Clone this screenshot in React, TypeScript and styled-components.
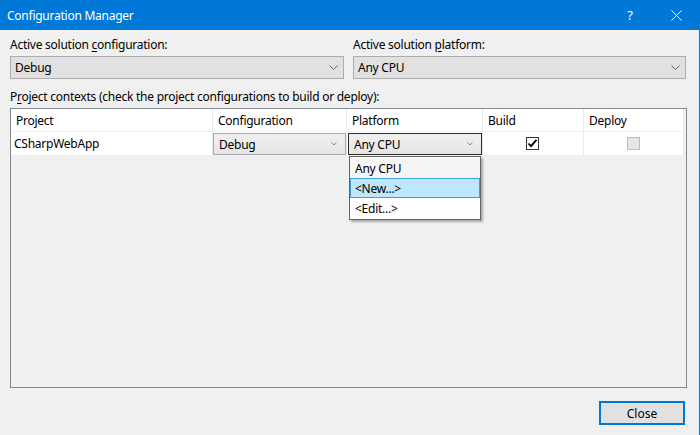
import React from 'react';
import styled, { createGlobalStyle } from 'styled-components';

const GlobalStyle = createGlobalStyle`
  html, body {
    margin: 0;
    padding: 0;
    background: #f0f0f0;
  }
  body {
    font-family: 'Segoe UI', 'Noto Sans', 'Open Sans', sans-serif;
    font-size: 12px;
    letter-spacing: -0.25px;
    color: #000;
  }
`;

const Window = styled.div`
  width: 700px;
  height: 435px;
  box-sizing: border-box;
  border-right: 1px solid #0078d7;
  background: #f0f0f0;
  display: flex;
  flex-direction: column;
  overflow: hidden;
`;

const TitleBar = styled.div`
  height: 30px;
  flex: none;
  background: #0078d7;
  color: #fff;
  display: flex;
  align-items: center;
  padding-left: 7px;
  font-size: 12px;
`;

const Title = styled.div`
  flex: 1;
`;

const TitleButton = styled.div`
  width: 46px;
  height: 30px;
  display: flex;
  align-items: center;
  justify-content: center;
  font-size: 13px;
`;

const Content = styled.div`
  flex: 1;
  display: flex;
  flex-direction: column;
  padding: 7px 13px 9px 10px;
  min-height: 0;
`;

const TopRow = styled.div`
  display: grid;
  grid-template-columns: 334px 333px;
  column-gap: 9px;
`;

const Field = styled.div`
  display: flex;
  flex-direction: column;
`;

const Label = styled.div`
  line-height: 16px;
  height: 16px;
  margin-bottom: 3px;
  white-space: nowrap;
`;

const Key = styled.span`
  text-decoration: underline;
  text-underline-offset: 2px;
`;

const Select = styled.div`
  height: 23px;
  box-sizing: border-box;
  border: 1px solid #adadad;
  background: #e1e1e1;
  display: flex;
  align-items: center;
  padding: 0 5px 0 4px;
`;

const SelectText = styled.div`
  flex: 1;
`;

const ContextsLabel = styled(Label)`
  margin-top: 10px;
  margin-bottom: 3px;
`;

const Grid = styled.div`
  flex: 1;
  border: 1px solid #828790;
  margin-right: -1px;
  background: #f0f0f0;
  display: flex;
  flex-direction: column;
`;

const GridRow = styled.div<{ $header?: boolean }>`
  display: grid;
  grid-template-columns: 202px 134px 136px 101px 100px;
  height: ${({ $header }) => ($header ? '22px' : '23px')};
  border-bottom: ${({ $header }) => ($header ? '1px solid #f0f0f0' : 'none')};
`;

const Cell = styled.div<{ $center?: boolean; $pad?: number }>`
  position: relative;
  background: #fff;
  border-right: 1px solid #eaeaea;
  display: flex;
  align-items: center;
  justify-content: ${({ $center }) => ($center ? 'center' : 'flex-start')};
  padding-left: ${({ $pad }) => $pad ?? 0}px;
  white-space: nowrap;
`;

const CellCombo = styled.div<{ $focused?: boolean }>`
  position: absolute;
  top: 1px;
  bottom: 0;
  left: ${({ $focused }) => ($focused ? '1px' : '0')};
  right: 0;
  box-sizing: border-box;
  border: 1px solid ${({ $focused }) => ($focused ? '#2b2b2b' : '#acacac')};
  background: linear-gradient(#f0f0f0, #e5e5e5);
  display: flex;
  align-items: center;
  padding: 0 8px 0 5px;
`;

const CheckBox = styled.div<{ $disabled?: boolean }>`
  width: 13px;
  height: 13px;
  box-sizing: border-box;
  border: 1px solid ${({ $disabled }) => ($disabled ? '#bcbcbc' : '#333')};
  background: ${({ $disabled }) => ($disabled ? '#e6e6e6' : '#fff')};
  display: flex;
  align-items: center;
  justify-content: center;
  margin-left: -1px;
`;

const Menu = styled.div`
  position: absolute;
  top: 24px;
  left: 2px;
  width: 132px;
  box-sizing: border-box;
  border: 1px solid #646464;
  background: #fff;
  box-shadow: 2px 2px 2px rgba(0, 0, 0, 0.3);
  padding: 1px 0;
  z-index: 2;
`;

const MenuItem = styled.div<{ $state?: 'current' | 'hover' }>`
  height: 20px;
  box-sizing: border-box;
  display: flex;
  align-items: center;
  padding-left: 4px;
  background: ${({ $state }) =>
    $state === 'hover' ? '#bee6fd' : $state === 'current' ? '#f5f5f5' : '#fff'};
  border: 1px solid ${({ $state }) => ($state === 'hover' ? '#3c9fd8' : 'transparent')};
`;

const Footer = styled.div`
  display: flex;
  justify-content: flex-end;
  padding-top: 13px;
  padding-bottom: 1px;
  margin-right: 1px;
`;

const Button = styled.button`
  width: 86px;
  height: 24px;
  box-sizing: border-box;
  border: 2px solid #0078d7;
  background: #e1e1e1;
  font: inherit;
  color: #000;
  padding: 0;
`;

const Chevron: React.FC<{ small?: boolean }> = ({ small }) =>
  small ? (
    <svg width="6" height="4" viewBox="0 0 6 4">
      <path d="M0.5 0.5 L3 3 L5.5 0.5" fill="none" stroke="#8a8a8a" strokeWidth="1" />
    </svg>
  ) : (
    <svg width="9" height="5" viewBox="0 0 9 5">
      <path d="M0.5 0.5 L4.5 4.5 L8.5 0.5" fill="none" stroke="#606060" strokeWidth="1" />
    </svg>
  );

const CloseIcon = () => (
  <svg width="11" height="11" viewBox="0 0 11 11">
    <path d="M0.5 0.5 L10.5 10.5 M10.5 0.5 L0.5 10.5" stroke="#fff" strokeWidth="1" />
  </svg>
);

const Check = () => (
  <svg width="11" height="11" viewBox="0 0 11 11">
    <path d="M1.5 5.5 L4 8.2 L9.5 1.8" fill="none" stroke="#000" strokeWidth="1.8" />
  </svg>
);

const App: React.FC = () => {
  return (
    <>
      <GlobalStyle />
      <Window>
        <TitleBar>
          <Title>Configuration Manager</Title>
          <TitleButton>?</TitleButton>
          <TitleButton>
            <CloseIcon />
          </TitleButton>
        </TitleBar>

        <Content>
          <TopRow>
            <Field>
              <Label>
                Active solution <Key>c</Key>onfiguration:
              </Label>
              <Select>
                <SelectText>Debug</SelectText>
                <Chevron />
              </Select>
            </Field>
            <Field>
              <Label>
                Active solution <Key>p</Key>latform:
              </Label>
              <Select>
                <SelectText>Any CPU</SelectText>
                <Chevron />
              </Select>
            </Field>
          </TopRow>

          <ContextsLabel>
            P<Key>r</Key>oject contexts (check the project configurations to build or deploy):
          </ContextsLabel>

          <Grid>
            <GridRow $header>
              <Cell $pad={5}>Project</Cell>
              <Cell $pad={5}>Configuration</Cell>
              <Cell $pad={5}>Platform</Cell>
              <Cell $pad={5}>Build</Cell>
              <Cell $pad={5}>Deploy</Cell>
            </GridRow>
            <GridRow>
              <Cell $pad={3}>CSharpWebApp</Cell>
              <Cell>
                <CellCombo>
                  <SelectText>Debug</SelectText>
                  <Chevron small />
                </CellCombo>
              </Cell>
              <Cell>
                <CellCombo $focused>
                  <SelectText>Any CPU</SelectText>
                  <Chevron small />
                </CellCombo>
                <Menu>
                  <MenuItem $state="current">Any CPU</MenuItem>
                  <MenuItem $state="hover">&lt;New...&gt;</MenuItem>
                  <MenuItem>&lt;Edit...&gt;</MenuItem>
                </Menu>
              </Cell>
              <Cell $center>
                <CheckBox>
                  <Check />
                </CheckBox>
              </Cell>
              <Cell $center>
                <CheckBox $disabled />
              </Cell>
            </GridRow>
          </Grid>

          <Footer>
            <Button>Close</Button>
          </Footer>
        </Content>
      </Window>
    </>
  );
};

export default App;
